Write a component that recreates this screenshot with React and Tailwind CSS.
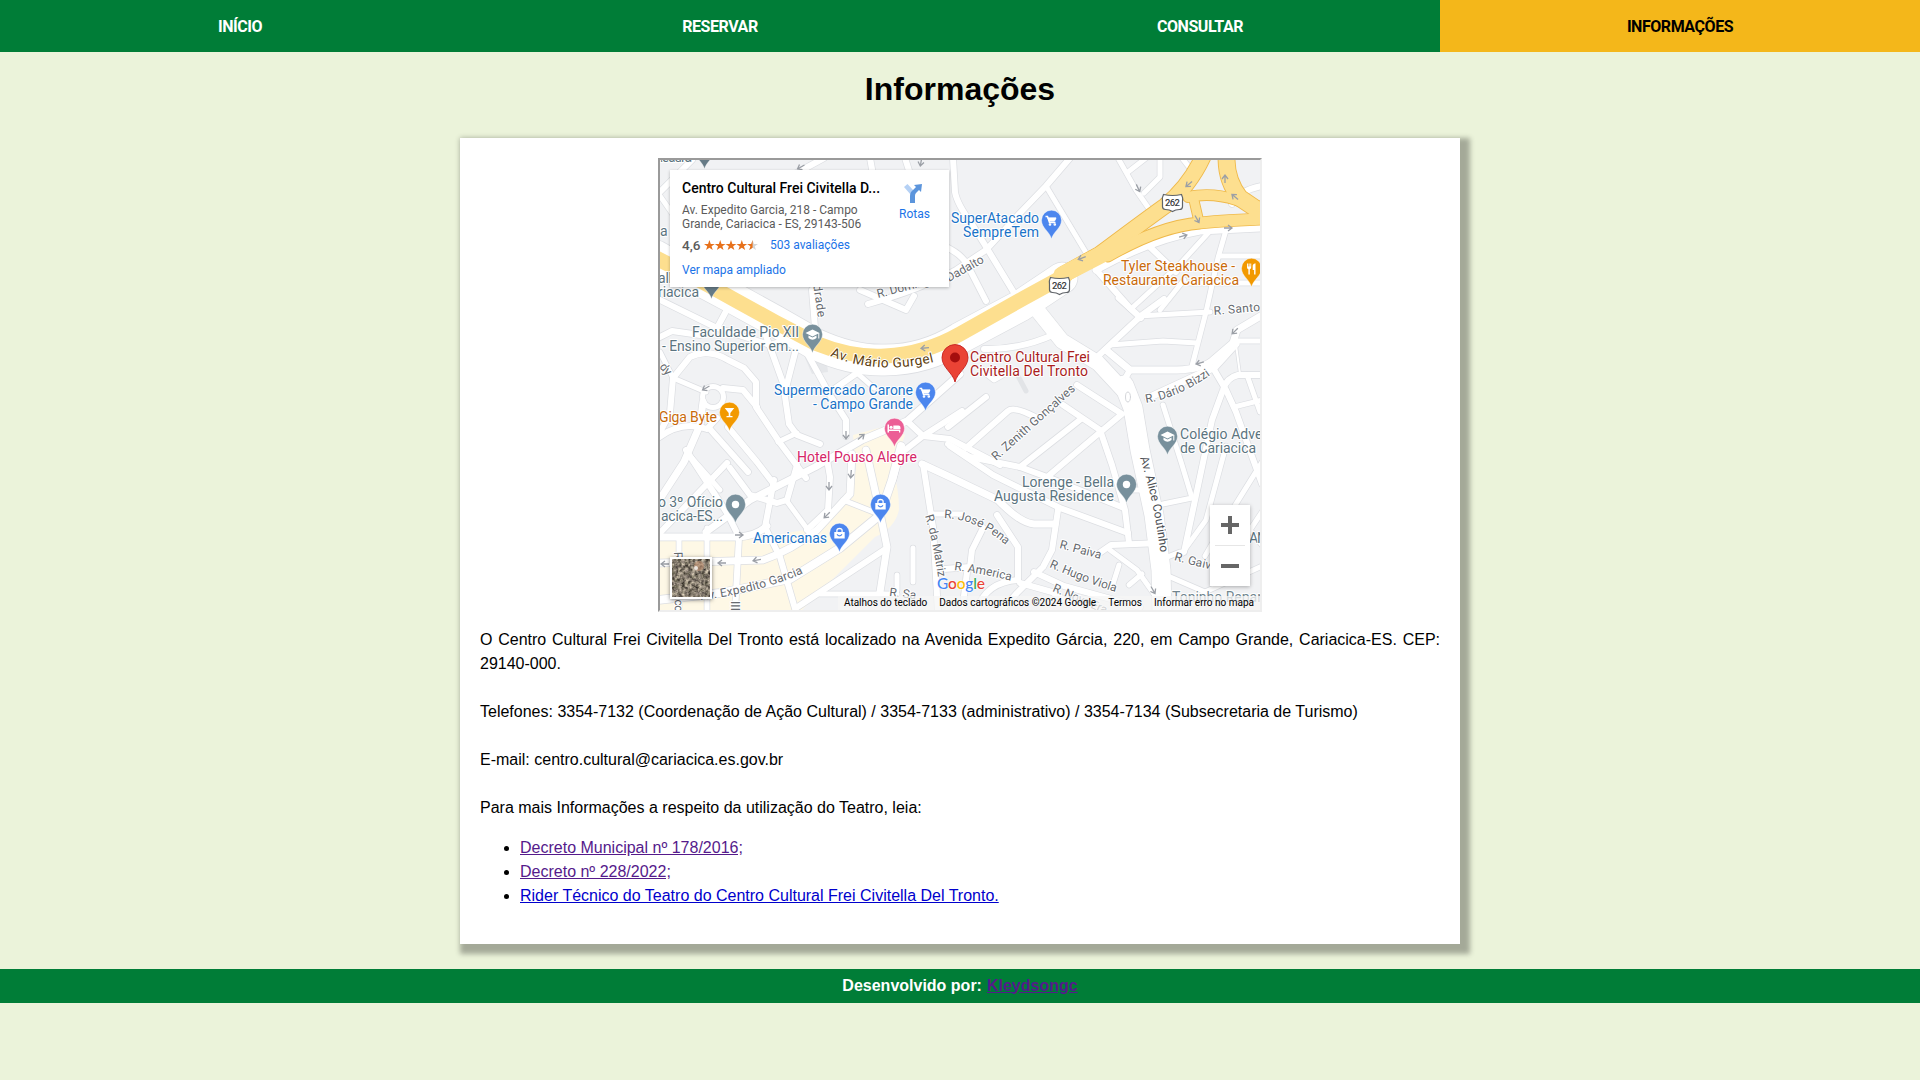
import React from "react";

const NAV = ["INÍCIO", "RESERVAR", "CONSULTAR", "INFORMAÇÕES"];

// Streets as [width, path], in map coordinates.
const STREETS = [
  [6, "M660 192L692 160"], [5, "M660 196L674 216"], [6, "M780 182L824 158"], [6, "M870 158L874 180"], [6, "M905 158L912 180"],
  [6, "M953 158L955 192Q957 204 972 224L988 250L1016 296"],
  [6, "M1070 158L1046 186L1020 213L986 250L956 270Q920 290 868 304"],
  [5, "M1046 186L1088 256"], [6, "M944 246Q962 254 968 266L986 301"],
  [5, "M1118 158L1136 190L1154 216"], [5, "M1160 158V177L1144 193"], [5, "M1128 172L1146 158"], [5, "M1182 158L1196 176"],
  [7, "M1096 270Q1150 240 1200 231L1262 228"], [6, "M1262 186Q1240 190 1232 204"],
  [6, "M1098 272L1130 308L1141 318"], [6, "M1150 247L1176 272"], [5, "M1210 231L1180 264L1132 308"],
  [5, "M1226 230L1218 258L1206 312L1192 366"], [5, "M1219 256H1262"], [5, "M1184 280L1160 310"], [5, "M1188 283H1262"],
  [6, "M1055 334Q1020 350 984 349"], [5, "M984 372L994 380L1008 372"], [5, "M1118 298L1138 316L1210 312"],
  [6, "M1164 299L1142 315L1096 358"], [5, "M1110 345L1163 341L1197 343"],
  [7, "M1106 350L1130 370L1177 370Q1202 369 1212 361L1233 343L1237 330L1264 314"],
  [6, "M1130 370L1122 384"], [5, "M1233 341H1262"], [7, "M1236 344L1215 367L1148 398"], [2, "M1236 345L1240 374"],
  [6, "M1213 368L1226 390L1236 412L1262 484"], [6, "M1262 375H1238Q1226 378 1223 390L1212 420L1184 552"],
  [5, "M1247 375L1260 412"], [5, "M1234 407L1262 400"], [5, "M1163 405L1182 465L1192 498L1163 504"],
  [5, "M1262 512L1250 530L1262 545"], [5, "M1226 446L1206 520L1180 556"], [5, "M1262 462L1226 520L1205 556"],
  [6, "M1077 385L1122 414L1098 434L1046 478"], [6, "M1063 405L1100 430L1112 465L1125 510L1129 543"],
  [6, "M1081 419L1020 467"], [6, "M1035 417Q1014 406 1008 411L966 448"], [6, "M948 427L986 397"],
  [6, "M948 444L970 457L1020 467L1047 477L1124 508"], [6, "M950 446L993 475L1060 508L1128 533"],
  [7, "M922 464L950 477L998 500Q1020 523 1034 524H1055"], [6, "M1058 510L1052 550L1043 567L1017 593L1000 612"],
  [6, "M1098 554L1111 545L1160 543"], [5, "M1110 550L1137 570L1154 594"], [5, "M1119 565L1113 584"], [5, "M1142 574L1129 585"],
  [6, "M997 515L1018 547V578"], [6, "M983 528L972 550L970 567L944 569"], [6, "M967 572L962 612"],
  [6, "M1018 580Q985 582 976 612"], [6, "M1020 583L1052 592L1082 612"], [6, "M1034 572L1064 586L1140 607"],
  [5, "M1120 490L1142 490"], [5, "M1168 576L1205 592L1262 566"], [5, "M1160 560L1180 552"],
  [6, "M658 299L717 328L731 302"], [6, "M717 328L770 345L797 337"], [6, "M658 338L672 331L700 335"],
  [6, "M673 378L690 357Q708 348 728 360L744 368L756 382V407L780 443L806 478"], [5, "M660 352L673 378L706 392"],
  [6, "M673 378L670 413L658 436"], [6, "M723 388L743 390L757 407"], [7, "M703 402L700 425L684 462L658 502"],
  [6, "M658 438Q682 420 707 429L717 418"], [6, "M728 427L757 462L776 487"], [6, "M709 428L748 472"],
  [6, "M765 333L783 383L789 424L797 435L820 444"], [6, "M797 345L786 388"], [6, "M797 335L830 395L846 420V436"],
  [6, "M857 373L830 392"], [5, "M857 373L874 388"], [5, "M778 442L797 433"],
  [7, "M960 374L907 421L862 440L815 467L750 500L706 532"], [6, "M907 421L923 436L950 439L1000 465"],
  [6, "M962 411L923 436L900 454L893 480"], [6, "M923 464L933 527L938 612"],
  [6, "M686 450L727 513L739 537L735 612"], [6, "M727 463L658 535"], [5, "M690 456L720 490"], [6, "M730 468L750 495L777 503L787 500L797 465"],
  [6, "M774 480L765 527L780 557L796 612"], [5, "M786 500L808 530"], [7, "M658 537H738Q756 536 767 526"],
  [5, "M707 528V612"], [5, "M679 537V612"], [7, "M658 563L763 560Q792 550 817 530L850 494L852 454"],
  [6, "M827 460L830 477L828 510L807 530"], [8, "M658 600L720 593L790 579L840 548L880 515L892 480L901 446"],
  [7, "M866 450L880 513L887 547L880 592"], [5, "M843 500L876 513"], [6, "M887 548L796 608"],
  [5, "M820 594H897"], [5, "M913 548V582"], [5, "M897 575V590"], [5, "M930 514H962"], [4, "M945 568H962"],
  [6, "M812 290L815 328"], [6, "M914 296L906 310L860 290"],
];

const BIG = [
  [15, "M1038 311L1062 341L1098 363L1124 391"],
  [19, "M1124 385L1133 408L1140 450L1154 515L1161 570L1162 612"],
  [31, "M656 256L690 275L735 299L775 321L815 344Q852 361 885 360Q925 360 960 338L1020 306L1062 278"],
];

const HIGHWAY = [
  [15, "M1064 274L1100 254Q1140 224 1165 206Q1192 184 1206 150"],
  [11, "M1108 256Q1160 226 1200 223Q1230 220 1264 219"],
  [16, "M1227 150Q1224 178 1240 198L1264 214"],
  [10, "M1188 197Q1212 192 1236 200L1264 208"],
  [9, "M1193 196L1199 222"],
];

const LABELS = [
  [951, 223, "SuperAtacado", 88, "#1a73c8"], [963, 237, "SempreTem", 76, "#1a73c8"],
  [1121, 271, "Tyler Steakhouse -", 114, "#c96a0a"], [1103, 285, "Restaurante Cariacica", 136, "#c96a0a"],
  [692, 337, "Faculdade Pio XII", 107, "#5b7480"], [662, 351, "- Ensino Superior em...", 137, "#5b7480"],
  [774, 395, "Supermercado Carone", 139, "#1a73c8"], [813, 409, "- Campo Grande", 100, "#1a73c8"],
  [659, 422, "Giga Byte", 58, "#c96a0a"], [797, 462, "Hotel Pouso Alegre", 120, "#d52668"],
  [970, 362, "Centro Cultural Frei", 120, "#a91d1d"], [970, 376, "Civitella Del Tronto", 118, "#a91d1d"],
  [1180, 439, "Colégio Adventista", 118, "#5b7480"], [1180, 453, "de Cariacica", 76, "#5b7480"],
  [1022, 487, "Lorenge - Bella", 92, "#5b7480"], [994, 501, "Augusta Residence", 120, "#5b7480"],
  [753, 543, "Americanas", 74, "#1a73c8"], [658, 507, "o 3º Ofício", 65, "#5b7480"], [661, 521, "acica-ES...", 62, "#5b7480"],
  [658, 283, "all", 14, "#5b7480"], [658, 297, "riacica", 41, "#5b7480"], [1172, 602, "Toninho Reparos", 105, "#71868f"],
  [1249, 543, "ANA", 26, "#5b7480"], [660, 236, "a", 7, "#5b7480"], [660, 162, "isaura", 32, "#5b7480"],
];

// Street names that follow a line.
const NAMES = [
  ["gurgel", "Av. Mário Gurgel", "M830 356Q880 376 938 361", 106, 13.5, "#5c3d0c"],
  ["zenith", "R. Zenith Gonçalves", "M996 461L1080 386", 107, 12],
  ["bizzi", "R. Dário Bizzi", "M1146 403Q1180 398 1216 371", 71, 12],
  ["santos", "R. Santos", "M1214 315L1284 309", 53, 12],
  ["alice", "Av. Alice Coutinho", "M1140 458Q1154 500 1161 558", 97, 12, "#4b4e52"],
  ["jose", "R. José Pena", "M944 518Q980 519 1012 551", 69, 12],
  ["matriz", "R. da Matriz", "M925 516Q934 546 939 584", 63, 12],
  ["america", "R. America", "M954 570Q985 574 1016 582", 58, 12],
  ["paiva", "R. Paiva", "M1059 548Q1082 554 1108 561", 43, 12],
  ["viola", "R. Hugo Viola", "M1049 567Q1085 583 1122 594", 71, 12],
  ["nova", "R. Nova Era", "M1052 591L1112 617", 58, 12],
  ["gaivota", "R. Gaivota", "M1174 560Q1200 568 1240 575", 55, 12],
  ["expedito", "Av. Expedito Garcia", "M701 600Q765 592 810 570", 106, 12],
  ["domingos", "R. Domingos", "M878 298L950 279", 67, 12],
  ["dadalto", "Dadalto", "M949 282L990 259", 41, 12],
  ["andrade", "Andrade", "M811 270L819 325", 48, 12],
  ["ssa", "R. Sa", "M889 596L922 600", 27, 12],
  ["rdesc", "R. Francisco", "M674 552L675 622", 60, 12],
  ["xii", "III", "M731 601L731 625", 10, 12],
  ["dy", "dy", "M659 367L670 380", 12, 12],
];

const ARROWS = [
  [1138, 188, 65], [1189, 184, 140], [1225, 179, 270], [1235, 197, 220], [1197, 219, 60], [1183, 236, 345], [1228, 228, 0],
  [1082, 258, 160], [925, 348, 175], [706, 388, 150], [846, 435, 90], [861, 437, 320], [829, 486, 90], [851, 474, 95], [827, 515, 135],
  [739, 535, 0], [722, 563, 180], [757, 560, 170], [665, 564, 180], [1235, 331, 135], [1200, 363, 165], [1153, 590, 60], [801, 167, 150], [921, 162, 100],
];

const ICONS = {
  cart: <g fill="none" stroke="#fff" strokeWidth="1.5"><path d="M-6-4H-4L-2 2H4" /><path d="M-3.6-2.6H4.5L3 .6H-2.4Z" fill="#fff" strokeWidth="1" /><circle cx="-1.5" cy="4" r=".6" /><circle cx="3.3" cy="4" r=".6" /></g>,
  bag: <g><path d="M-5.2-1.5H5.2V5H-5.2Z" fill="#fff" /><path d="M-2.6-1V-3Q-2.6-5 0-5T2.6-3V-1" fill="none" stroke="#fff" strokeWidth="1.3" /><path d="M-2.5.8Q0 4 2.5.8" fill="none" stroke="#4c86ee" strokeWidth="1.2" /></g>,
  school: <g fill="#fff"><path d="M0-5L7-1.5 0 2-7-1.5Z" /><path d="M-4 1L0 3.1 4 1V3.5Q0 7-4 3.5Z" /><path d="M5.8-1.5H6.8V4H5.8Z" /></g>,
  glass: <path d="M-4.8-4.5H4.8L.8.5V3.5H3V4.8H-3V3.5H-.8V.5Z" fill="#fff" />,
  bed: <g fill="#fff"><path d="M-7-4H-5.5V1H5.8V4H4.5V2.5H-5.5V4H-7Z" /><circle cx="-3.4" cy="-1.2" r="1.5" /><path d="M-1.2-3H4Q6-3 6-.8V.4H-1.2Z" /></g>,
  fork: <g fill="#fff"><path d="M-4.5-5H-3.6V-2H-2.9V-5H-1.9V-2H-1.2V-5H-.3V-1Q-.6.6-1.7.8V6H-3.1V.8Q-4.3.6-4.5-1Z" /><path d="M1.2-3Q1.6-5 4-5.3V6H2.6V1.5H1.2Z" /></g>,
  dot: <circle r="3.7" fill="#fff" />,
};

const PINS = [
  [1051.5, 239, "#4c86ee", "cart"], [925.5, 411, "#4c86ee", "cart"], [880.5, 523, "#4c86ee", "bag"], [839.5, 552, "#4c86ee", "bag"],
  [1251.5, 287, "#f29900", "fork"], [729.5, 431, "#f29900", "glass"], [894.5, 447, "#ec5f96", "bed"], [812.5, 353, "#78909c", "school"],
  [1167.5, 455, "#78909c", "school"], [1126.5, 503, "#78909c", "dot"], [735.5, 523, "#78909c", "dot"], [711.5, 299, "#667b86", "dot"], [704.5, 169, "#667b86", "dot"],
];

const PIN = "M0 0C-1.5-7-10-11-10-18.8A10 10 0 1 1 10-18.8C10-11 1.5-7 0 0Z";

function Shield({ x, y }) {
  return (
    <g transform={`translate(${x} ${y})`}>
      <path d="M-9-8Q0-6 9-8Q11-4 10-1V4Q10 7 7 7Q3 7 0 9Q-3 7-7 7Q-10 7-10 4V-1Q-11-4-9-8Z" fill="#fff" stroke="#5f6368" strokeWidth="1.2" />
      <text y="3.6" textAnchor="middle" fontSize="9.5" fontWeight="500" textLength="15" fill="#3c4043">262</text>
    </g>
  );
}

function MapCanvas() {
  const all = [...STREETS, ...BIG];
  return (
    <svg viewBox="660 160 600 450" className="block h-[450px] w-[600px] font-[Roboto,sans-serif]">
      <rect x="660" y="160" width="600" height="450" fill="#f1f2f4" />
      <path d="M660 537H765L815 528L842 500L856 470L853 435L890 425L905 435L893 470Q899 489 899 510Q895 528 875 537L800 612H660Z" fill="#fef8e6" />
      <path d="M805 358L826 356L828 372L812 374Z" fill="#e5e7ea" />
      <g fill="none" strokeLinejoin="round" strokeLinecap="round">
        {all.map(([w, d], i) => <path key={i} d={d} stroke="#dcdee2" strokeWidth={w + 1.4} />)}
        <circle cx="713" cy="397" r="10.5" stroke="#dcdee2" strokeWidth="6.4" />
        {all.map(([w, d], i) => <path key={i} d={d} stroke="#fff" strokeWidth={w} />)}
        <circle cx="713" cy="397" r="10.5" stroke="#fff" strokeWidth="5" />
        <path d="M1018 376L1026 391" stroke="#e2e4e7" strokeWidth="5" />
        <ellipse cx="1128" cy="397" rx="2.5" ry="5" stroke="#d4d6da" />
        <path d="M656 258L690 275L735 300L775 322L815 343Q852 358 885 356Q925 354 960 334L1024 298L1066 275" stroke="#fddf8f" strokeWidth="15" />
        {HIGHWAY.map(([w, d], i) => <path key={i} d={d} stroke="#efb94a" strokeWidth={w + 1.8} />)}
        {HIGHWAY.map(([w, d], i) => <path key={i} d={d} stroke="#fddf8f" strokeWidth={w} />)}
        <path d="M1062 275L1118 246" stroke="#fddf8f" strokeWidth="17" />
      </g>
      {ARROWS.map(([x, y, r], i) => (
        <path key={i} d="M-4 0H3M0-3L4 0L0 3" fill="none" stroke="#9b9fa6" strokeWidth="1.3" transform={`translate(${x} ${y}) rotate(${r})`} />
      ))}
      <Shield x={1172.5} y={202.5} />
      <Shield x={1059.5} y={285.5} />
      <g stroke="#fff" strokeWidth="2" strokeLinejoin="round" paintOrder="stroke">
        {NAMES.map(([id, t, d, len, size, color]) => (
          <React.Fragment key={id}>
            <path id={id} d={d} fill="none" stroke="none" />
            <text fontSize={size} fill={color || "#666a6f"}><textPath href={`#${id}`} textLength={len}>{t}</textPath></text>
          </React.Fragment>
        ))}
        {LABELS.map(([x, y, t, len, color]) => (
          <text key={t} x={x} y={y} fontSize="14" fill={color} textLength={len}>{t}</text>
        ))}
      </g>
      {PINS.map(([x, y, color, icon], i) => (
        <g key={i} transform={`translate(${x} ${y})`}>
          <path d={PIN} fill={color} stroke="#fff" strokeWidth=".4" />
          <g transform="translate(0 -18.5)">{ICONS[icon]}</g>
        </g>
      ))}
      <g transform="translate(955 382)">
        <path d={PIN} transform="scale(1.3)" fill="#ea4335" stroke="#c5221f" strokeWidth=".7" />
        <circle cy="-24.5" r="5" fill="#a50e0e" />
      </g>
    </svg>
  );
}

function PlaceCard() {
  const star = "M6 0L7.5 4.2H12L8.4 6.8L9.7 11L6 8.4L2.3 11L3.6 6.8L0 4.2H4.5Z";
  return (
    <div className="absolute left-[10px] top-[10px] flex h-[117px] w-[279px] justify-between bg-white pl-3 pr-[19px] font-[Roboto,sans-serif] shadow-[0_1px_3px_rgba(0,0,0,0.25)]">
      <div className="w-[202px] whitespace-nowrap pt-[10px] text-[12px] leading-[14px] text-[#5b5b5b]">
        <div className="text-[14px] font-medium leading-[17px] text-black">Centro Cultural Frei Civitella D...</div>
        <div className="mt-[6px]">Av. Expedito Garcia, 218 - Campo<br />Grande, Cariacica - ES, 29143-506</div>
        <div className="mt-[7px] flex items-center">
          <span className="w-[22px] text-[13.5px] font-medium">4,6</span>
          <svg viewBox="0 0 60 12" className="h-[11px] w-[54px]">
            <path d={star} transform="translate(48)" fill="#d5d5d5" />
            {[0, 12, 24, 36].map((x) => <path key={x} d={star} transform={`translate(${x})`} fill="#e7711b" />)}
            <path d="M54 0V8.4L50.3 11L51.6 6.8L48 4.2H52.5Z" fill="#e7711b" />
          </svg>
          <a className="ml-3 text-[#1a73e8]">503 avaliações</a>
        </div>
        <a className="mt-[11px] block text-[#1a73e8]">Ver mapa ampliado</a>
      </div>
      <div className="flex flex-col items-center pt-[13px]">
        <svg viewBox="0 0 20 20" className="mr-[3px] h-5 w-5">
          <path d="M1 4L4.5 1L11 8L8 12Z" fill="#b5d1f5" />
          <path d="M7 20V13Q7 9 10 7L13 4L11 2L19 1L18 9L16 7L13 10Q12 11 12 13V20Z" fill="#5c95dc" />
        </svg>
        <a className="mt-[3px] text-[12px] leading-4 text-[#1a73e8]">Rotas</a>
      </div>
    </div>
  );
}

function MapFrame() {
  return (
    <div className="relative mx-auto h-[454px] w-[604px] overflow-hidden border-2 border-b-[#eeeeee] border-l-[#9a9a9a] border-r-[#eeeeee] border-t-[#9a9a9a]">
      <MapCanvas />
      <PlaceCard />
      <div className="absolute bottom-[11px] left-[10px] h-[42px] w-[42px] border-2 border-white shadow-[0_1px_4px_rgba(0,0,0,0.5)]">
        <svg viewBox="0 0 38 38" className="block h-full w-full">
          <filter id="ground" x="0" y="0" width="1" height="1" colorInterpolationFilters="sRGB">
            <feTurbulence type="fractalNoise" baseFrequency=".3" numOctaves="3" seed="4" />
            <feColorMatrix values=".9 .5 0 0 -.18  .85 .5 0 0 -.19  .8 .4 0 0 -.17  0 0 0 0 1" />
          </filter>
          <rect width="38" height="38" filter="url(#ground)" />
          <circle cx="27" cy="7" r="5" fill="#c69878" opacity=".6" />
          <circle cx="24" cy="9" r="2" fill="#ece6e0" />
        </svg>
      </div>
      <div className="absolute right-[10px] top-[345px] flex h-[81px] w-10 flex-col items-center bg-white shadow-[0_1px_4px_rgba(0,0,0,0.3)]">
        <svg viewBox="0 0 18 18" className="my-[11px] h-[18px] w-[18px]"><path d="M7 0H11V7H18V11H11V18H7V11H0V7H7Z" fill="#666" /></svg>
        <div className="h-px w-[30px] bg-[#e6e6e6]" />
        <svg viewBox="0 0 18 18" className="my-[11px] h-[18px] w-[18px]"><path d="M0 7H18V11H0Z" fill="#666" /></svg>
      </div>
      <div className="absolute left-[277px] top-[413px] flex font-[Lato,sans-serif] text-[15.5px] font-medium leading-5 tracking-[-0.2px] [text-shadow:0_0_2px_white,0_0_2px_white]">
        <span className="text-[#4285f4]">G</span><span className="text-[#ea4335]">o</span><span className="text-[#fbbc04]">o</span><span className="text-[#4285f4]">g</span><span className="text-[#34a853]">l</span><span className="text-[#ea4335]">e</span>
      </div>
      <div className="absolute bottom-0 right-0 flex h-[14px] items-center gap-3 whitespace-nowrap bg-[#f5f5f5]/75 pl-[6px] pr-[6px] font-[Roboto,sans-serif] text-[10px] text-black">
        <span>Atalhos do teclado</span><span>Dados cartográficos ©2024 Google</span><span>Termos</span><span>Informar erro no mapa</span>
      </div>
    </div>
  );
}

export default function App() {
  return (
    <div className="min-h-screen bg-[#ebf3da] font-['Liberation_Sans',Arial,sans-serif] text-base leading-6 text-black">
      <nav className="grid h-[52px] grid-cols-4 bg-[#007d37] font-[Roboto,sans-serif] font-bold tracking-[-0.45px] text-white">
        {NAV.map((n, i) => (
          <a key={n} className={i === 3 ? "flex items-center justify-center bg-[#f4b71a] pt-0.5 text-black" : "flex items-center justify-center pt-0.5"}>{n}</a>
        ))}
      </nav>
      <h1 className="pt-[19px] text-center text-[32px] font-bold leading-9">Informações</h1>
      <main className="mx-auto mt-[31px] h-[806px] w-[1000px] bg-white p-5 shadow-[5px_5px_5px_5px_rgba(0,0,0,0.3)]">
        <MapFrame />
        <div className="mt-4 space-y-6">
          <p className="text-justify">O Centro Cultural Frei Civitella Del Tronto está localizado na Avenida Expedito Gárcia, 220, em Campo Grande, Cariacica-ES. CEP: 29140-000.</p>
          <p>Telefones: 3354-7132 (Coordenação de Ação Cultural) / 3354-7133 (administrativo) / 3354-7134 (Subsecretaria de Turismo)</p>
          <p>E-mail: centro.cultural@cariacica.es.gov.br</p>
          <p>Para mais Informações a respeito da utilização do Teatro, leia:</p>
        </div>
        <ul className="mt-4 list-disc pl-10">
          <li><a className="text-[#551a8b] underline">Decreto Municipal nº 178/2016;</a></li>
          <li><a className="text-[#551a8b] underline">Decreto nº 228/2022;</a></li>
          <li><a className="text-[#0000cc] underline">Rider Técnico do Teatro do Centro Cultural Frei Civitella Del Tronto.</a></li>
        </ul>
      </main>
      <footer className="mt-[25px] flex h-[34px] items-center justify-center gap-[5px] bg-[#007d37] pb-px font-bold text-white">
        Desenvolvido por: <a className="text-[#551a8b] underline">Kleydsongc</a>
      </footer>
    </div>
  );
}
